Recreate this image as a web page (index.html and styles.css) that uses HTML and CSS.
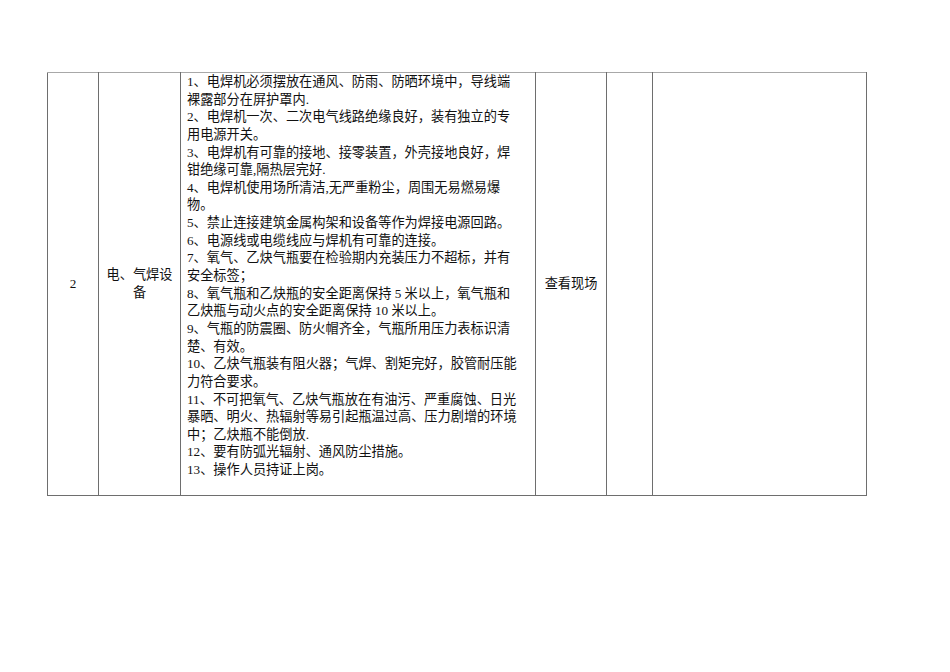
FILE: index.html
```html
<!DOCTYPE html>
<html lang="zh-CN">
<head>
<meta charset="utf-8">
<title>电、气焊设备</title>
<link rel="stylesheet" href="styles.css">
</head>
<body>
<div class="page">
  <table class="sheet">
    <colgroup>
      <col class="c-no">
      <col class="c-name">
      <col class="c-req">
      <col class="c-way">
      <col class="c-a">
      <col class="c-b">
    </colgroup>
    <tbody>
      <tr>
        <td class="no">2</td>
        <td class="name">电、气焊设备</td>
        <td class="req">
          <div class="req-text">
            <p>1、电焊机必须摆放在通风、防雨、防晒环境中，导线端裸露部分在屏护罩内.</p>
            <p>2、电焊机一次、二次电气线路绝缘良好，装有独立的专用电源开关。</p>
            <p>3、电焊机有可靠的接地、接零装置，外壳接地良好，焊钳绝缘可靠,隔热层完好.</p>
            <p>4、电焊机使用场所清洁,无严重粉尘，周围无易燃易爆物。</p>
            <p>5、禁止连接建筑金属构架和设备等作为焊接电源回路。</p>
            <p>6、电源线或电缆线应与焊机有可靠的连接。</p>
            <p>7、氧气、乙炔气瓶要在检验期内充装压力不超标，并有安全标签；</p>
            <p>8、氧气瓶和乙炔瓶的安全距离保持 5 米以上，氧气瓶和乙炔瓶与动火点的安全距离保持 10 米以上。</p>
            <p>9、气瓶的防震圈、防火帽齐全，气瓶所用压力表标识清楚、有效。</p>
            <p>10、乙炔气瓶装有阻火器；气焊、割矩完好，胶管耐压能力符合要求。</p>
            <p>11、不可把氧气、乙炔气瓶放在有油污、严重腐蚀、日光暴晒、明火、热辐射等易引起瓶温过高、压力剧增的环境中；乙炔瓶不能倒放.</p>
            <p>12、要有防弧光辐射、通风防尘措施。</p>
            <p>13、操作人员持证上岗。</p>
          </div>
        </td>
        <td class="way">查看现场</td>
        <td class="blank"></td>
        <td class="blank"></td>
      </tr>
    </tbody>
  </table>
</div>
</body>
</html>
```
FILE: styles.css
```css
html, body {
  margin: 0;
  padding: 0;
  background: #ffffff;
}

.page {
  padding: 72px 0 0 47px;
  font-family: "Liberation Serif", "Noto Sans CJK SC", serif;
  font-size: 13.2px;
  color: #111111;
}

.sheet {
  border-collapse: collapse;
  table-layout: fixed;
  width: 819px;
}

.c-no { width: 51px; }
.c-name { width: 82px; }
.c-req { width: 355px; }
.c-way { width: 71px; }
.c-a { width: 46px; }
.c-b { width: 214px; }

.sheet td {
  border: 1px solid #6e6e6e;
  padding: 0;
  vertical-align: middle;
  line-height: 17.64px;
}

.sheet tr:first-child td {
  border-top-color: #a8a8a8;
}

.sheet td.no {
  text-align: center;
}

.sheet td.name {
  text-align: center;
  padding: 0 7px;
}

.sheet td.req {
  padding: 0 0 16px 6px;
  vertical-align: top;
}

.req-text {
  width: 25.25em;
}

.req-text p {
  margin: 0;
}

.sheet td.way {
  text-align: center;
}
```
